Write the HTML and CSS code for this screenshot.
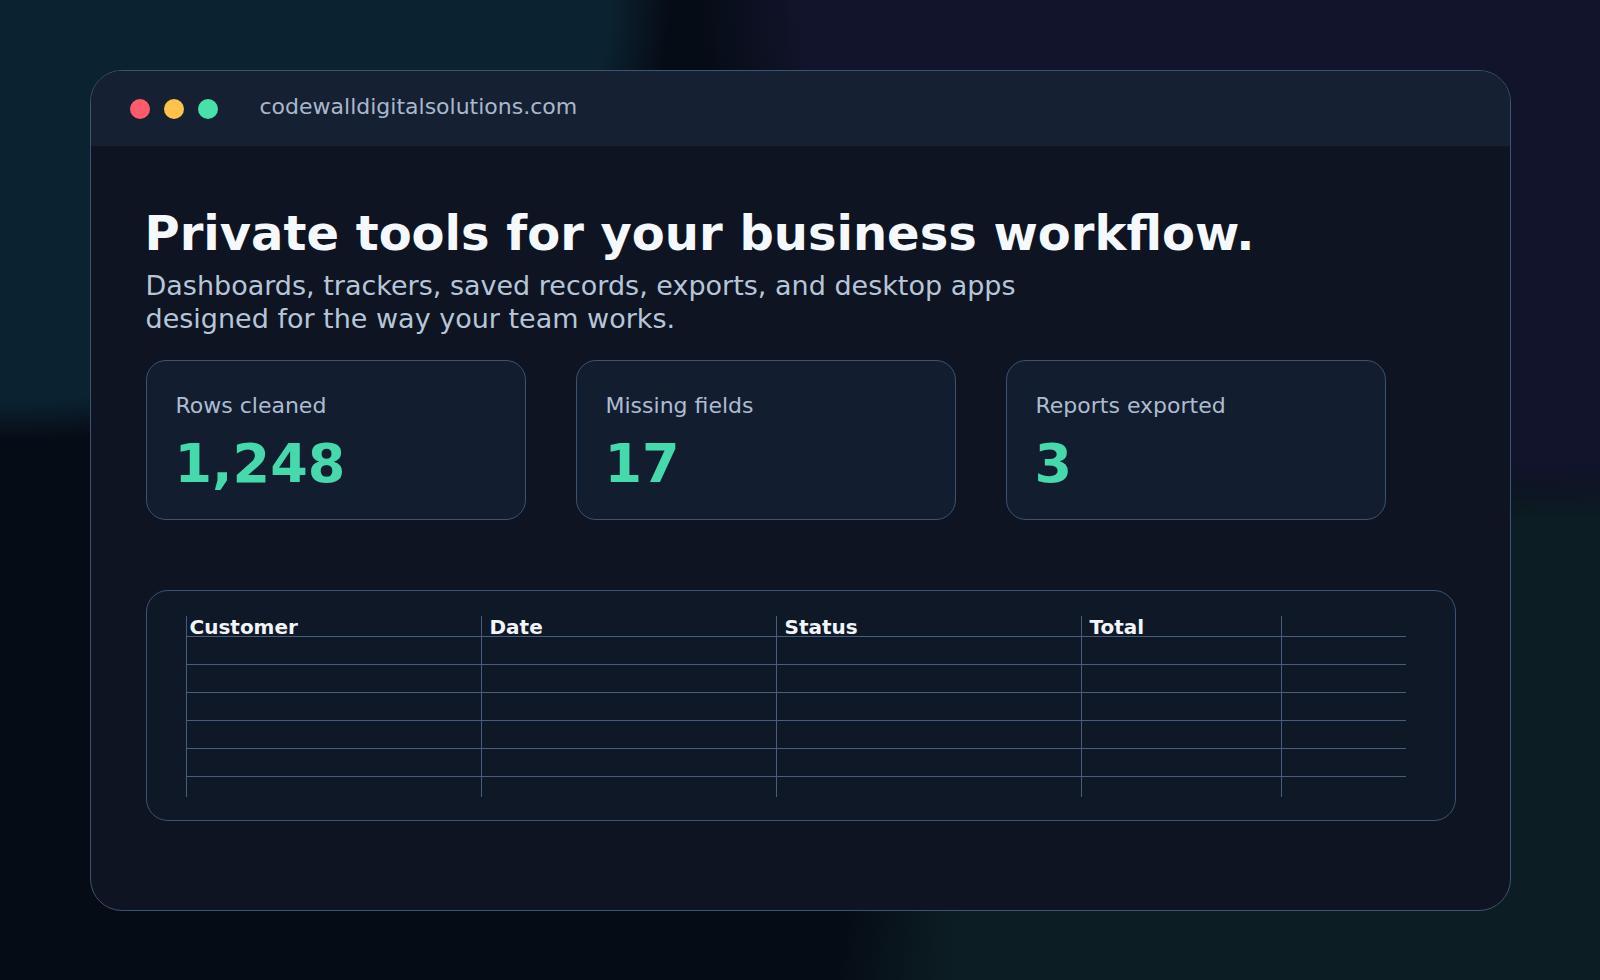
FILE: index.html
```html
<!DOCTYPE html>
<html lang="en">
<head>
  <meta charset="UTF-8" />
  <meta name="viewport" content="width=device-width, initial-scale=1.0"/>
  <title>Codewall Digital Solutions</title>
  <link rel="stylesheet" href="styles.css">
</head>
<body>
  <div class="window">
    <div class="titlebar">
      <div class="dots">
        <span class="dot red"></span>
        <span class="dot yellow"></span>
        <span class="dot green"></span>
      </div>
      <div class="url">codewalldigitalsolutions.com</div>
    </div>

    <div class="content">
      <h1>Private tools for your business workflow.</h1>
      <p class="lead">Dashboards, trackers, saved records, exports, and desktop apps designed for the way your team works.</p>

      <div class="stats">
        <div class="stat">
          <div class="stat-label">Rows cleaned</div>
          <div class="stat-value">1,248</div>
        </div>
        <div class="stat">
          <div class="stat-label">Missing fields</div>
          <div class="stat-value">17</div>
        </div>
        <div class="stat">
          <div class="stat-label">Reports exported</div>
          <div class="stat-value">3</div>
        </div>
      </div>

      <!-- mock sheet -->
      <div class="sheet">
        <div class="grid">
          <div class="cell head">Customer</div>
          <div class="cell head">Date</div>
          <div class="cell head">Status</div>
          <div class="cell head">Total</div>
          <div class="cell head"></div>

          <div class="cell"></div><div class="cell"></div><div class="cell"></div><div class="cell"></div><div class="cell"></div>
          <div class="cell"></div><div class="cell"></div><div class="cell"></div><div class="cell"></div><div class="cell"></div>
          <div class="cell"></div><div class="cell"></div><div class="cell"></div><div class="cell"></div><div class="cell"></div>
          <div class="cell"></div><div class="cell"></div><div class="cell"></div><div class="cell"></div><div class="cell"></div>
          <div class="cell"></div><div class="cell"></div><div class="cell"></div><div class="cell"></div><div class="cell"></div>
          <div class="cell last"></div><div class="cell last"></div><div class="cell last"></div><div class="cell last"></div><div class="cell last"></div>
        </div>
      </div>
    </div>
  </div>
</body>
</html>
```

FILE: styles.css
```css
* {
  box-sizing: border-box;
}
html, body {
  height: 100%;
}
body {
  margin: 0;
  padding-top: 70px;
  font-family: "DejaVu Sans", "Liberation Sans", sans-serif;
  color: #f4f7fc;
  background-color: #060c16;
  background-image:
    radial-gradient(ellipse 670px 440px at 0 0, #0b2230 0%, #0b2230 91%, rgba(11,34,48,0) 100%),
    radial-gradient(ellipse 900px 520px at 100% 0, #11142b 0%, #11142b 89%, rgba(17,20,43,0) 100%),
    radial-gradient(ellipse 760px 540px at 100% 100%, #0c1e23 0%, #0c1e23 85%, rgba(12,30,35,0) 100%);
  background-repeat: no-repeat;
  overflow: hidden;
}
.window {
  width: 1421px;
  height: 841px;
  margin: 0 auto;
  background: #0e1422;
  border: 1px solid #3c5372;
  border-radius: 32px;
  overflow: hidden;
}
.titlebar {
  height: 75px;
  background: #152032;
  display: flex;
  align-items: center;
  padding-left: 39px;
}
.dots {
  display: flex;
  gap: 14px;
}
.dot {
  width: 20px;
  height: 20px;
  border-radius: 50%;
}
.red { background: #ff5b6d; }
.yellow { background: #ffc34d; }
.green { background: #4be0a9; }
.url {
  margin-left: 42px;
  padding-bottom: 4px;
  font-size: 22px;
  color: #a9b8cd;
}
.content {
  padding: 60px 54px 0 55px;
}
h1 {
  margin: 0 0 8px -1px;
  font-size: 48px;
  line-height: 1.15;
  font-weight: bold;
  color: #f5f8fd;
}
.lead {
  margin: 0;
  max-width: 900px;
  font-size: 27px;
  line-height: 1.23;
  color: #b7c5d9;
}
.stats {
  display: grid;
  grid-template-columns: repeat(3, 380px);
  gap: 50px;
  margin-top: 24px;
}
.stat {
  background: #121e2f;
  border: 1px solid #3c5372;
  border-radius: 20px;
  padding: 30px 28px 25px;
}
.stat-label {
  font-size: 22px;
  line-height: 1.4;
  color: #aebcd0;
  padding-left: 1px;
}
.stat-value {
  margin-top: 13px;
  font-size: 54px;
  line-height: 1.1;
  font-weight: bold;
  color: #45d9ac;
}
.sheet {
  margin-top: 70px;
  background: #0f1827;
  border: 1px solid #3c5372;
  border-radius: 22px;
  padding: 25px 0 23px 39px;
}
.grid {
  display: grid;
  grid-template-columns: 295px 295px 305px 200px 125px;
  grid-template-rows: 21px repeat(5, 28px) 20px;
}
.cell {
  border-left: 1px solid #465e7b;
  border-bottom: 1px solid #465e7b;
}
.cell.last {
  border-bottom: none;
}
.head {
  font-size: 20px;
  line-height: 20px;
  font-weight: bold;
  color: #f1f4f9;
  padding: 1px 0 0 8px;
  white-space: nowrap;
}
.head:first-child {
  padding-left: 3px;
}
```
